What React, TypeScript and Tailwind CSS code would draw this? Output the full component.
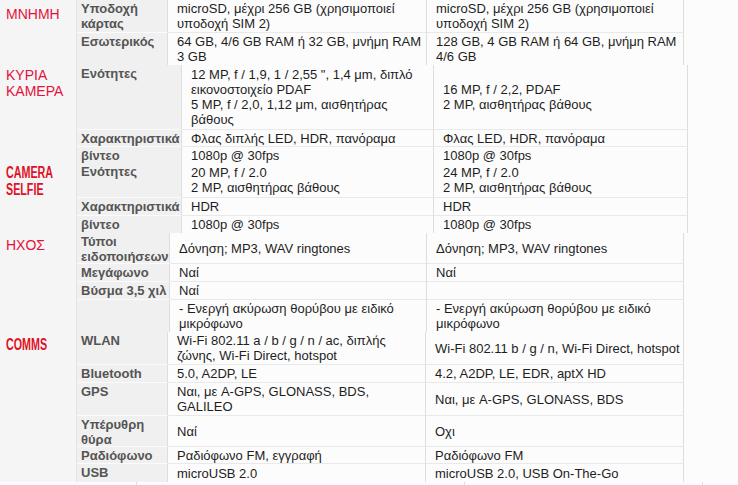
import React from "react";

type Row = { h: string; label: string[]; v1: string[]; v2: string[] };
type Sec = {
  title: React.ReactNode;
  titleCls: string;
  lw: string;
  w1: string;
  w2: string;
  rows: Row[];
};

const condensed =
  "inline-block origin-left scale-x-[0.67] whitespace-nowrap font-bold text-[16px] leading-[17px] text-[#df1126] font-['Liberation_Sans',Arial,sans-serif]";
const plain = "text-[14px] leading-[16px] text-[#e3123a] whitespace-nowrap";

const sections: Sec[] = [
  {
    title: <div className={plain}>ΜΝΗΜΗ</div>,
    titleCls: "pt-[6px]",
    lw: "w-[91px]",
    w1: "w-[259px]",
    w2: "w-[257px]",
    rows: [
      {
        h: "h-[32px]",
        label: ["Υποδοχή", "κάρτας"],
        v1: ["microSD, μέχρι 256 GB (χρησιμοποιεί", "υποδοχή SIM 2)"],
        v2: ["microSD, μέχρι 256 GB (χρησιμοποιεί", "υποδοχή SIM 2)"],
      },
      {
        h: "h-[33px]",
        label: ["Εσωτερικός"],
        v1: ["64 GB, 4/6 GB RAM ή 32 GB, μνήμη RAM", "3 GB"],
        v2: ["128 GB, 4 GB RAM ή 64 GB, μνήμη RAM", "4/6 GB"],
      },
    ],
  },
  {
    title: (
      <div className={plain}>
        ΚΥΡΙΑ
        <br />
        ΚΑΜΕΡΑ
      </div>
    ),
    titleCls: "pt-[2px]",
    lw: "w-[105px]",
    w1: "w-[252px]",
    w2: "w-[254px]",
    rows: [
      {
        h: "h-[64px]",
        label: ["Ενότητες"],
        v1: [
          "12 MP, f / 1,9, 1 / 2,55 \", 1,4 μm, διπλό",
          "εικονοστοιχείο PDAF",
          "5 MP, f / 2,0, 1,12 μm, αισθητήρας",
          "βάθους",
        ],
        v2: ["16 MP, f / 2,2, PDAF", "2 MP, αισθητήρας βάθους"],
      },
      {
        h: "h-[17px]",
        label: ["Χαρακτηριστικά"],
        v1: ["Φλας διπλής LED, HDR, πανόραμα"],
        v2: ["Φλας LED, HDR, πανόραμα"],
      },
      {
        h: "h-[17px]",
        label: ["βίντεο"],
        v1: ["1080p @ 30fps"],
        v2: ["1080p @ 30fps"],
      },
    ],
  },
  {
    title: (
      <div className={condensed}>
        CAMERA
        <br />
        SELFIE
      </div>
    ),
    titleCls: "pt-[1px]",
    lw: "w-[105px]",
    w1: "w-[252px]",
    w2: "w-[254px]",
    rows: [
      {
        h: "h-[34px]",
        label: ["Ενότητες"],
        v1: ["20 MP, f / 2.0", "2 MP, αισθητήρας βάθους"],
        v2: ["24 MP, f / 2.0", "2 MP, αισθητήρας βάθους"],
      },
      {
        h: "h-[18px]",
        label: ["Χαρακτηριστικά"],
        v1: ["HDR"],
        v2: ["HDR"],
      },
      {
        h: "h-[18px]",
        label: ["βίντεο"],
        v1: ["1080p @ 30fps"],
        v2: ["1080p @ 30fps"],
      },
    ],
  },
  {
    title: <div className={plain}>ΗΧΟΣ</div>,
    titleCls: "pt-[4px]",
    lw: "w-[93px]",
    w1: "w-[257px]",
    w2: "w-[257px]",
    rows: [
      {
        h: "h-[30px]",
        label: ["Τύποι", "ειδοποιήσεων"],
        v1: ["Δόνηση; MP3, WAV ringtones"],
        v2: ["Δόνηση; MP3, WAV ringtones"],
      },
      { h: "h-[18px]", label: ["Μεγάφωνο"], v1: ["Ναί"], v2: ["Ναί"] },
      { h: "h-[18px]", label: ["Βύσμα 3,5 χιλ"], v1: ["Ναί"], v2: [""] },
      {
        h: "h-[33px]",
        label: [],
        v1: ["- Ενεργή ακύρωση θορύβου με ειδικό", "μικρόφωνο"],
        v2: ["- Ενεργή ακύρωση θορύβου με ειδικό", "μικρόφωνο"],
      },
    ],
  },
  {
    title: <div className={condensed}>COMMS</div>,
    titleCls: "pt-[4px]",
    lw: "w-[91px]",
    w1: "w-[258px]",
    w2: "w-[258px]",
    rows: [
      {
        h: "h-[32px]",
        label: ["WLAN"],
        v1: ["Wi-Fi 802.11 a / b / g / n / ac, διπλής", "ζώνης, Wi-Fi Direct, hotspot"],
        v2: ["Wi-Fi 802.11 b / g / n, Wi-Fi Direct, hotspot"],
      },
      {
        h: "h-[18px]",
        label: ["Bluetooth"],
        v1: ["5.0, A2DP, LE"],
        v2: ["4.2, A2DP, LE, EDR, aptX HD"],
      },
      {
        h: "h-[33px]",
        label: ["GPS"],
        v1: ["Ναι, με A-GPS, GLONASS, BDS,", "GALILEO"],
        v2: ["Ναι, με A-GPS, GLONASS, BDS"],
      },
      {
        h: "h-[31px]",
        label: ["Υπέρυθρη", "θύρα"],
        v1: ["Ναί"],
        v2: ["Οχι"],
      },
      {
        h: "h-[17px]",
        label: ["Ραδιόφωνο"],
        v1: ["Ραδιόφωνο FM, εγγραφή"],
        v2: ["Ραδιόφωνο FM"],
      },
      {
        h: "h-[19px]",
        label: ["USB"],
        v1: ["microUSB 2.0"],
        v2: ["microUSB 2.0, USB On-The-Go"],
      },
    ],
  },
];

function Lines({ lines }: { lines: string[] }) {
  return (
    <>
      {lines.map((l, i) => (
        <div key={i} className="whitespace-nowrap">
          {l || "\u00a0"}
        </div>
      ))}
    </>
  );
}

function Section({ s }: { s: Sec }) {
  return (
    <div className="flex">
      <div
        className={`w-[77px] shrink-0 bg-[#f5f5f5] border-r border-r-[#e4e4e4] pl-[6px] ${s.titleCls}`}
      >
        {s.title}
      </div>
      <div className="flex flex-col">
        {s.rows.map((r, i) => (
          <div key={i} className="flex">
            <div
              className={`${s.lw} ${r.h} shrink-0 bg-[#f0f0f0] border-r border-r-[#dedede] pl-[4px] pt-[1px] font-bold text-[#555555] ${
                i > 0 ? "border-t border-t-[#fbfbfb]" : ""
              }`}
            >
              <Lines lines={r.label} />
            </div>
            <div
              className={`${s.w1} ${r.h} shrink-0 flex flex-col justify-center bg-[#fcfcfc] border-r border-r-[#dedede] pl-[9px] ${
                i > 0 ? "border-t border-t-[#e9e9e9]" : ""
              }`}
            >
              <Lines lines={r.v1} />
            </div>
            <div
              className={`${s.w2} ${r.h} shrink-0 flex flex-col justify-center bg-[#fcfcfc] border-r border-r-[#dedede] pl-[9px] ${
                i > 0 ? "border-t border-t-[#e9e9e9]" : ""
              }`}
            >
              <Lines lines={r.v2} />
            </div>
          </div>
        ))}
      </div>
    </div>
  );
}

export default function App() {
  return (
    <div className="w-[738px] h-[485px] overflow-hidden bg-[#fcfcfc] font-['Liberation_Sans',Arial,sans-serif] text-[13px] leading-[15px] text-[#1e1e1e]">
      {sections.map((s, i) => (
        <Section key={i} s={s} />
      ))}
      <div className="flex h-[10px]">
        <div className="w-[137px] border-r border-r-[#dedede]" />
        <div className="w-[328px] border-r border-r-[#dedede]" />
        <div className="w-[238px] border-r border-r-[#dedede]" />
      </div>
    </div>
  );
}
